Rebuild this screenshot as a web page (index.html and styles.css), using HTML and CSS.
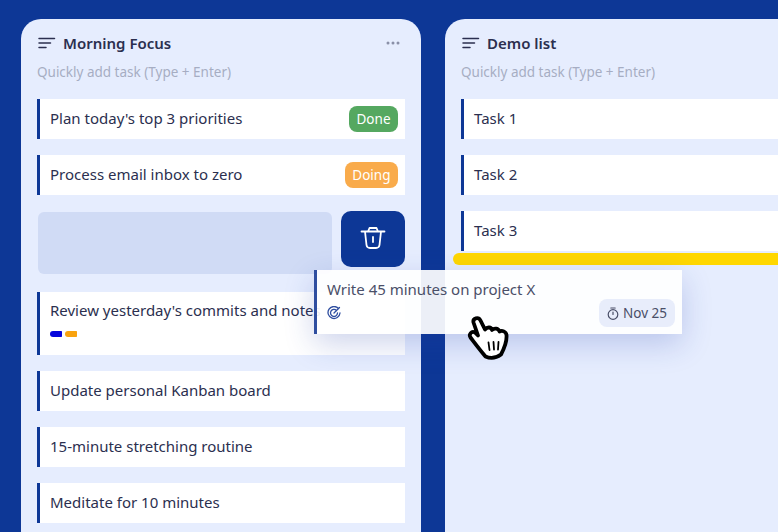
FILE: index.html
```html
<!DOCTYPE html>
<html lang="en">
<head>
    <meta charset="UTF-8">
    <meta name="viewport" content="width=device-width, initial-scale=1.0">
    <title>Kanban board</title>
    <link rel="stylesheet" href="styles.css">
</head>
<body>
    <div class="board">
        <section class="column">
            <div class="column-head">
                <svg class="list-icon" width="18" height="12" viewBox="0 0 18 12"><path d="M1 1.500h15.500M1 6h11.500M1 10.500h7" fill="none" stroke="#2b2f4f" stroke-width="1.500" stroke-linecap="round"/></svg>
                <h2>Morning Focus</h2>
                <svg class="more-icon" width="14" height="4" viewBox="0 0 14 4"><circle cx="2" cy="2" r="1.500"/><circle cx="7" cy="2" r="1.500"/><circle cx="12" cy="2" r="1.500"/></svg>
            </div>
            <div class="quick-add">Quickly add task (Type + Enter)</div>
            <ul class="task-list">
                <li class="task"><span class="task-title">Plan today's top 3 priorities</span><span class="badge badge-done">Done</span></li>
                <li class="task"><span class="task-title">Process email inbox to zero</span><span class="badge badge-doing">Doing</span></li>
                <li class="swipe-row">
                    <div class="swipe-space"></div>
                    <button class="delete-btn">
                        <svg width="26" height="24" viewBox="0 0 26 24" fill="none" stroke="#fff" stroke-width="1.800" stroke-linecap="round" stroke-linejoin="round"><path d="M1.500 5.500h23M8 5.500l1.500-3.500h7l1.500 3.500M5 5.500l1.500 13.500q.4 3 3.500 3h6q3.100 0 3.500-3l1.500-13.500M13 11v5"/></svg>
                    </button>
                </li>
                <li class="task task-tall">
                    <span class="task-title">Review yesterday's commits and notes</span>
                    <div class="tags"><span class="tag tag-blue"></span><span class="tag tag-orange"></span></div>
                </li>
                <li class="task"><span class="task-title">Update personal Kanban board</span></li>
                <li class="task"><span class="task-title">15-minute stretching routine</span></li>
                <li class="task"><span class="task-title">Meditate for 10 minutes</span></li>
            </ul>
        </section>

        <section class="column">
            <div class="column-head">
                <svg class="list-icon" width="18" height="12" viewBox="0 0 18 12"><path d="M1 1.500h15.500M1 6h11.500M1 10.500h7" fill="none" stroke="#2b2f4f" stroke-width="1.500" stroke-linecap="round"/></svg>
                <h2>Demo list</h2>
            </div>
            <div class="quick-add">Quickly add task (Type + Enter)</div>
            <ul class="task-list">
                <li class="task"><span class="task-title">Task 1</span></li>
                <li class="task"><span class="task-title">Task 2</span></li>
                <li class="task"><span class="task-title">Task 3</span></li>
                <li class="drop-line"></li>
            </ul>
        </section>
    </div>

    <div class="drag-card">
        <div class="drag-title">Write 45 minutes on project X</div>
        <div class="drag-foot">
            <svg width="14" height="14" viewBox="0 0 14 14" fill="none" stroke="#2f4ea0" stroke-width="1.300" stroke-linecap="round"><path d="M11.500 2.500a6 6 0 1 0 1.500 4.500"/><path d="M9.500 4.500a3.500 3.500 0 1 0 1 2.500"/><path d="M7 7l5.500-5.500"/></svg>
            <span class="date-chip">
                <svg width="12" height="13" viewBox="0 0 12 13" fill="none" stroke="#4a4f68" stroke-width="1.200" stroke-linecap="round"><circle cx="6" cy="7.500" r="4.800"/><path d="M6 7.500V5M3.800 1h4.400"/></svg>
                Nov 25
            </span>
        </div>
    </div>

    <svg class="hand" width="42" height="46" viewBox="0 0 42 46">
        <path d="M6.500 7.500C5.500 3 11.500 1.500 13.500 5.500L18 14.500C20.500 11.500 24 12 25 15C27.500 12.500 31.500 13.500 32.500 16.500C35 15 39 16.500 39.500 20C40 26 37.500 33 34 39.500C28.500 43.500 23 43.500 18.500 41.500C13 35 8.500 29 3.500 22.500C1.500 19.500 4.500 15.500 8 17.500L11 20.500Z" fill="#fff" stroke="#000" stroke-width="3.800" stroke-linejoin="round"/>
        <path d="M21.500 27.500l1 7.500M26.500 27l.5 7.500M31.500 27l-.5 7.500" stroke="#000" stroke-width="1.800" stroke-linecap="round"/>
    </svg>
</body>
</html>
```

FILE: styles.css
```css
* {
    box-sizing: border-box;
}

body {
    margin: 0;
    height: 532px;
    overflow: hidden;
    background-color: #0d3796;
    font-family: "Noto Sans", sans-serif;
    color: #2b2f4f;
    position: relative;
}

.board {
    display: flex;
    gap: 24px;
    padding: 19px 0 0 21px;
}

.column {
    flex: 0 0 400px;
    height: 560px;
    padding: 15px 16px 0;
    background-color: #e6edfe;
    border-radius: 20px;
}

.column-head {
    display: flex;
    align-items: center;
    gap: 7px;
    padding-left: 1px;
    height: 18px;
}

.column-head h2 {
    margin: 0;
    flex: 1;
    font-size: 15px;
    font-weight: 600;
}

.more-icon {
    fill: #8a90a8;
    margin-right: 5px;
}

.quick-add {
    margin-top: 11px;
    font-size: 13.500px;
    line-height: 18px;
    color: #a6adc3;
}

.task-list {
    list-style: none;
    margin: 18px 0 0;
    padding: 0;
    display: flex;
    flex-direction: column;
    gap: 16px;
}

.task {
    display: flex;
    align-items: center;
    justify-content: space-between;
    min-height: 40px;
    padding: 0 7px 0 10px;
    background-color: #fff;
    border-left: 3px solid #0d3796;
    font-size: 15px;
}

.task-title {
    white-space: nowrap;
    margin-top: -2px;
}

.task-tall {
    display: block;
    height: 63px;
    padding-top: 8px;
    line-height: 21px;
}

.task-tall .task-title {
    margin-top: 0;
}

.tags {
    display: flex;
    gap: 3px;
    margin-top: 10px;
}

.tag {
    width: 12px;
    height: 6px;
    border-radius: 4px 1px 1px 4px;
}

.tag-blue {
    background-color: #0505dc;
}

.tag-orange {
    background-color: #f9a30f;
}

.badge {
    padding: 0 7.500px;
    height: 26px;
    line-height: 26px;
    border-radius: 8px;
    color: #fff;
    font-size: 13.500px;
}

.badge-done {
    background-color: #55a860;
}

.badge-doing {
    background-color: #f9ab4b;
}

.swipe-row {
    display: flex;
    align-items: flex-start;
    gap: 9px;
    height: 65px;
}

.swipe-space {
    flex: 1;
    height: 62px;
    margin: 1px 0 0 1px;
    background-color: #d0dbf5;
    border-radius: 6px;
}

.delete-btn {
    flex: 0 0 64px;
    height: 56px;
    padding: 0;
    background-color: #0d3796;
    border: none;
    border-radius: 10px;
}

.drop-line {
    height: 12px;
    margin: -14px -8px 0;
    background-color: #ffd700;
    border-radius: 6px;
}

.drag-card {
    position: absolute;
    left: 314px;
    top: 270px;
    width: 368px;
    height: 64px;
    padding: 9px 7px 0 10px;
    background-color: rgba(255, 255, 255, 0.92);
    border-left: 3px solid #2f4ea0;
    box-shadow: 0 10px 30px rgba(30, 60, 170, 0.22);
    font-size: 15px;
    color: #4a4f68;
}

.drag-title {
    line-height: 21px;
}

.drag-foot {
    display: flex;
    align-items: center;
    justify-content: space-between;
    margin-top: -1px;
}

.date-chip {
    display: flex;
    align-items: center;
    gap: 4px;
    height: 28px;
    padding: 0 8px;
    background-color: #e8edfb;
    border-radius: 8px;
    font-size: 13.500px;
}

.hand {
    position: absolute;
    left: 467px;
    top: 315px;
}
```
